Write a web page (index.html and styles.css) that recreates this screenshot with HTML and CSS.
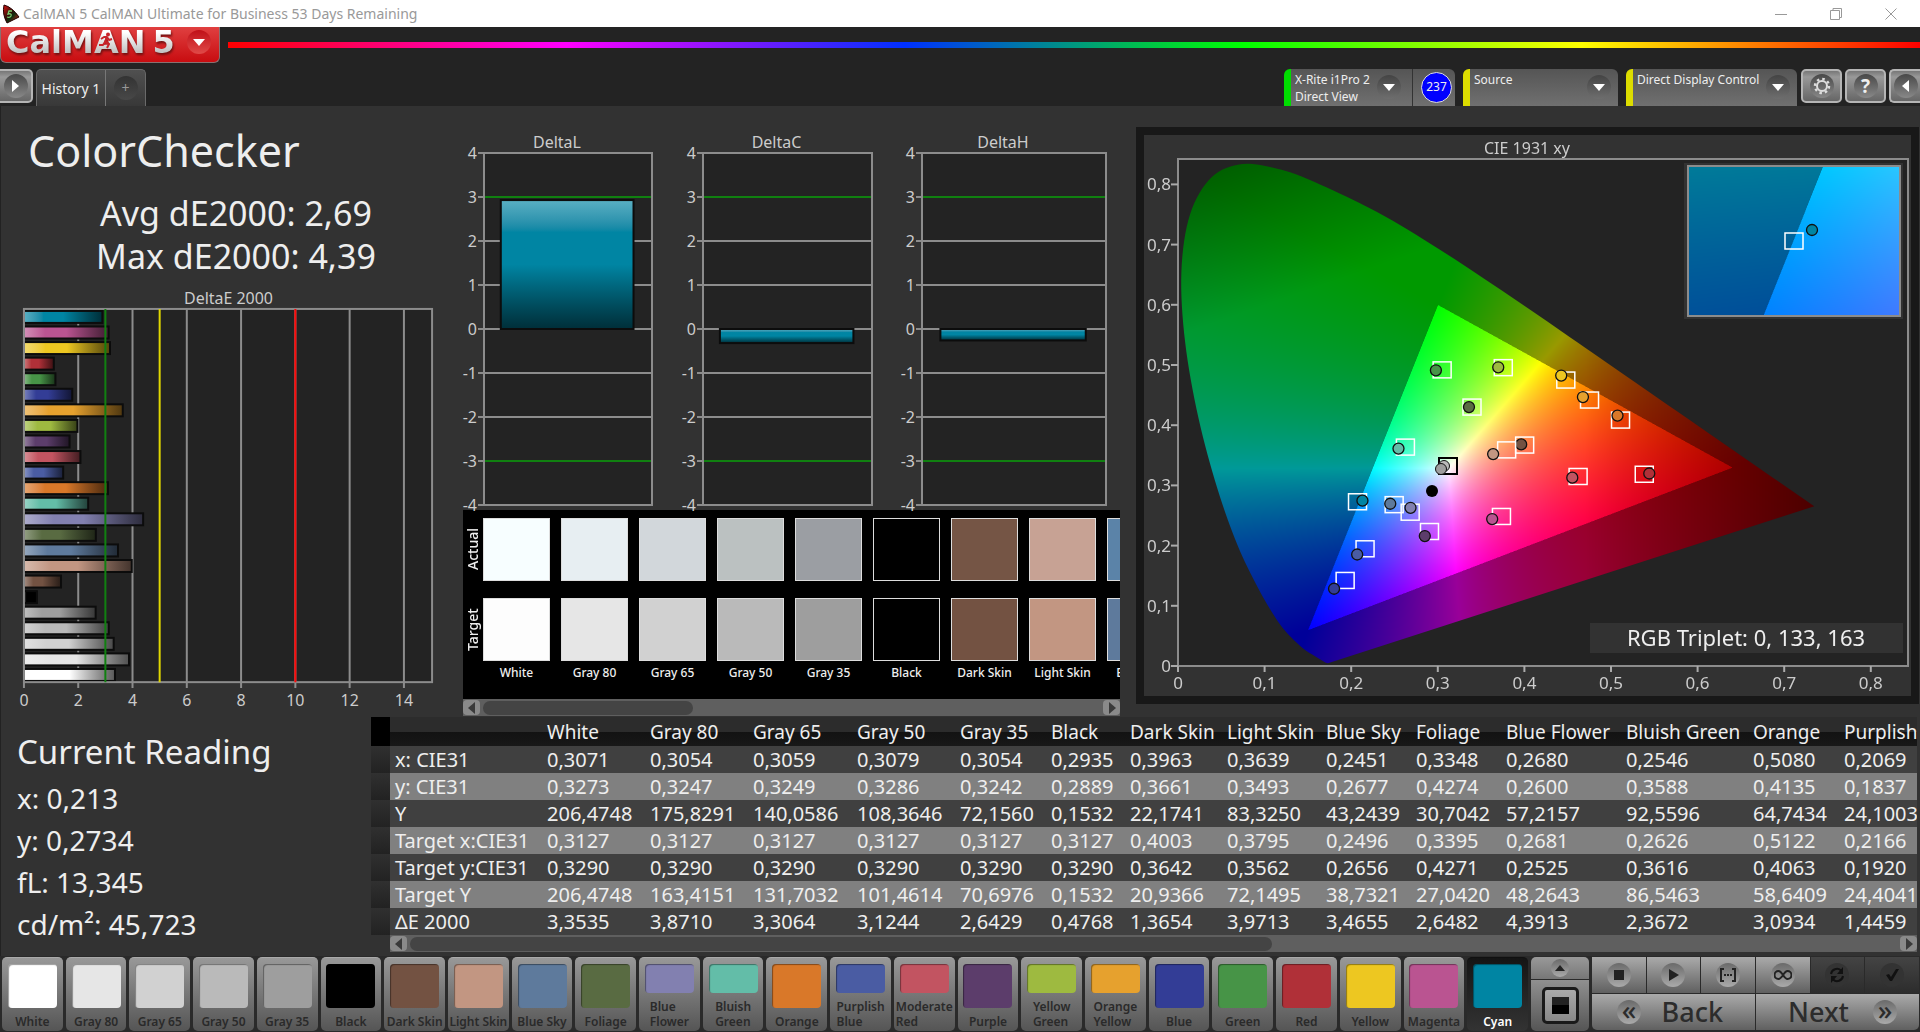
FILE: index.html
```html
<!DOCTYPE html>
<html lang="en">
<head>
  <meta charset="UTF-8" />
  <meta name="viewport" content="width=device-width, initial-scale=1.0"/>
  <title>CalMAN 5 CalMAN Ultimate for Business 53 Days Remaining</title>
  <link rel="stylesheet" href="styles.css">
</head>
<body>
  <header class="titlebar">
    <svg class="app-icon" width="18" height="20" viewBox="0 0 18 20">
      <defs>
        <linearGradient id="iconFill" x1="0" y1="0" x2="1" y2="1">
          <stop offset="0" stop-color="#e01010"/><stop offset="0.45" stop-color="#301008"/>
          <stop offset="0.6" stop-color="#103010"/><stop offset="1" stop-color="#f02020"/>
        </linearGradient>
      </defs>
      <path d="M2 1 Q0 10 5 19 L17 13 Q10 3 2 1 Z" fill="url(#iconFill)" stroke="#200" stroke-width="1"/>
      <path d="M10 7 H7 L6 10 Q10 9 9 12 Q8 14 5 13" fill="none" stroke="#7ad070" stroke-width="1.3"/>
    </svg>
    <span class="titlebar-text">CalMAN 5 CalMAN Ultimate for Business 53 Days Remaining</span>
    <button class="win-btn" aria-label="Minimize"><svg width="14" height="14" viewBox="0 0 14 14"><path d="M1 7.500H13"/></svg></button>
    <button class="win-btn" aria-label="Restore"><svg width="14" height="14" viewBox="0 0 14 14"><path d="M1.500 3.500H10.500V12.500H1.500ZM4 3.500V1.500H12.500V10.500H10.500"/></svg></button>
    <button class="win-btn" aria-label="Close"><svg width="14" height="14" viewBox="0 0 14 14"><path d="M1.500 1.500L12.500 12.500M12.500 1.500L1.500 12.500"/></svg></button>
  </header>

  <div class="brand">
    <button class="logo" aria-label="CalMAN 5 menu">
      <span class="logo-text">CalMAN</span><span class="logo-text">5</span>
      <svg class="runner" width="16" height="18" viewBox="0 0 16 18">
        <circle cx="10" cy="2.500" r="2" fill="#c8242a"/>
        <path d="M9 5L7 10L11 12L9 16M7 10L5 13L1 13M3 7L6 5L9 5L11 8L14 7" fill="none" stroke="#c8242a" stroke-width="2" stroke-linejoin="round"/>
      </svg>
      <span class="logo-arrow"><svg width="12" height="7" viewBox="0 0 12 7"><path d="M0 0H12L6 7Z" fill="#fff"/></svg></span>
    </button>
    <div class="rainbow"></div>
  </div>

  <nav class="tabs">
    <button class="square-btn first" aria-label="Expand"><span class="dot"><svg width="8" height="12" viewBox="0 0 8 12"><path d="M0 0L7 6L0 12Z"/></svg></span></button>
    <div class="history">
      <button class="history-tab">History 1</button>
      <button class="history-add" aria-label="Add history"><span>+</span></button>
    </div>
    <div class="devices">
      <div class="device meter">
        <button class="device-btn">X-Rite i1Pro 2<br>Direct View<span class="dot"><svg width="12" height="7" viewBox="0 0 12 7"><path d="M0 0H12L6 7Z"/></svg></span></button>
        <button class="count"><span>237</span></button>
      </div>
      <div class="device source">
        <button class="device-btn">Source<span class="dot"><svg width="12" height="7" viewBox="0 0 12 7"><path d="M0 0H12L6 7Z"/></svg></span></button>
      </div>
      <div class="device display">
        <button class="device-btn">Direct Display Control<span class="dot"><svg width="12" height="7" viewBox="0 0 12 7"><path d="M0 0H12L6 7Z"/></svg></span></button>
      </div>
    </div>
    <button class="square-btn" aria-label="Settings"><span class="dot"><svg width="18" height="18" viewBox="0 0 18 18"><circle cx="9" cy="9" r="5" fill="none" stroke="#ddd" stroke-width="2"/><circle cx="9" cy="9" r="7" fill="none" stroke="#ddd" stroke-width="2.500" stroke-dasharray="2.500 3"/></svg></span></button>
    <button class="square-btn" aria-label="Help"><span class="dot help">?</span></button>
    <button class="square-btn last" aria-label="Collapse"><span class="dot"><svg width="8" height="12" viewBox="0 0 8 12"><path d="M7 0L0 6L7 12Z"/></svg></span></button>
  </nav>

  <main>
    <section class="upper">
      <div class="summary">
        <h1>ColorChecker</h1>
        <p class="avg">Avg dE2000: 2,69</p>
        <p class="avg">Max dE2000: 4,39</p>
        <svg id="deltaE" class="chart" viewBox="0 0 463 433"></svg>
      </div>

      <div class="middle">
        <div class="deltas">
          <svg id="deltaL" class="chart" viewBox="0 0 219 404"></svg>
          <svg id="deltaC" class="chart" viewBox="0 0 219 404"></svg>
          <svg id="deltaH" class="chart" viewBox="0 0 219 404"></svg>
        </div>
        <div class="compare">
          <div class="compare-side"><span>Actual</span><span>Target</span></div>
          <div class="compare-list" id="compare"></div>
        </div>
        <div class="scrollbar">
          <button aria-label="Scroll left"><svg width="8" height="12" viewBox="0 0 8 12"><path d="M7 0L0 6L7 12Z"/></svg></button>
          <div class="track"><div class="thumb short"></div></div>
          <button aria-label="Scroll right"><svg width="8" height="12" viewBox="0 0 8 12"><path d="M1 0L8 6L1 12Z"/></svg></button>
        </div>
      </div>

      <div class="cie">
        <canvas id="cieColors" width="1534" height="1122"></canvas>
        <svg id="cieMarks" class="chart" viewBox="0 0 767 561"></svg>
      </div>
    </section>

    <section class="lower">
      <div class="reading">
        <h2>Current Reading</h2>
        <p>x: 0,213</p>
        <p>y: 0,2734</p>
        <p>fL: 13,345</p>
        <p>cd/m²: 45,723</p>
      </div>
      <div class="grid-wrap">
        <div class="grid-scroll">
          <table id="grid"></table>
        </div>
        <div class="scrollbar grid-bar">
          <button aria-label="Scroll left"><svg width="8" height="12" viewBox="0 0 8 12"><path d="M7 0L0 6L7 12Z"/></svg></button>
          <div class="track"><div class="thumb long"></div></div>
          <button aria-label="Scroll right"><svg width="8" height="12" viewBox="0 0 8 12"><path d="M1 0L8 6L1 12Z"/></svg></button>
        </div>
      </div>
    </section>
  </main>

  <footer>
    <div class="patches" id="patches"></div>
    <div class="pattern">
      <button class="pattern-up" aria-label="More"><span class="knob"><svg width="10" height="6" viewBox="0 0 10 6"><path d="M0 6L5 0L10 6Z"/></svg></span></button>
      <button class="pattern-main" aria-label="Pattern window"><span class="frame"><span></span></span></button>
    </div>
    <div class="controls">
      <button class="ctl" aria-label="Stop"><span class="knob"><svg width="16" height="16" viewBox="0 0 16 16"><path d="M3 3H13V13H3Z"/></svg></span></button>
      <button class="ctl" aria-label="Play"><span class="knob"><svg width="16" height="16" viewBox="0 0 16 16"><path d="M4 2L14 8L4 14Z"/></svg></span></button>
      <button class="ctl" aria-label="Read series"><span class="knob"><svg width="18" height="16" viewBox="0 0 18 16"><path class="line" d="M5 2H2V14H5M13 2H16V14H13"/><path d="M5 7H7V9H5ZM8 7H10V9H8ZM11 7H13V9H11Z"/></svg></span></button>
      <button class="ctl" aria-label="Continuous"><span class="knob"><svg width="18" height="12" viewBox="0 0 18 12"><path class="line" d="M9 6C7 3 6 2 4.500 2A4 4 0 0 0 4.500 10C6 10 7 9 9 6C11 3 12 2 13.500 2A4 4 0 0 1 13.500 10C12 10 11 9 9 6Z"/></svg></span></button>
      <button class="ctl off" aria-label="Refresh"><span class="knob"><svg width="18" height="18" viewBox="0 0 18 18"><path class="line" d="M3 8A6 6 0 0 1 13 4.500M15 10A6 6 0 0 1 5 13.500"/><path d="M15 1V8H9ZM3 17V10H9Z"/></svg></span></button>
      <button class="ctl off" aria-label="Accept"><span class="knob"><svg width="16" height="16" viewBox="0 0 16 16"><path d="M2 8L5 7L7 10L12 2H15L8 14H6Z"/></svg></span></button>
      <button class="step"><span class="knob">«</span>Back</button>
      <button class="step next">Next<span class="knob">»</span></button>
    </div>
  </footer>

  <script src="script.js"></script>
</body>
</html>
```
FILE: styles.css
```css
* {
  box-sizing: border-box;
}

body {
  font-family: 'Noto Sans', 'Open Sans', sans-serif;
  background-color: #232323;
  color: #eee;
  margin: 0;
  min-height: 100vh;
  display: flex;
  flex-direction: column;
  overflow-x: hidden;
}

button {
  font-family: inherit;
  color: inherit;
  border: 0;
  margin: 0;
  padding: 0;
  background: none;
}

h1, h2, p {
  margin: 0;
  font-weight: normal;
}

.chart {
  display: block;
  width: 100%;
  overflow: visible;
}

/* window title */
.titlebar {
  display: flex;
  align-items: center;
  height: 27px;
  background-color: #fff;
  color: #999;
  font-size: 14px;
}

.app-icon {
  margin: 0 3px 0 2px;
}

.titlebar-text {
  flex: 1;
}

.win-btn {
  width: 55px;
  height: 26px;
  display: flex;
  align-items: center;
  justify-content: center;
}

.win-btn svg {
  fill: none;
  stroke: #999;
}

.win-btn:last-child {
  margin-right: 2px;
}

/* logo and rainbow line */
.brand {
  display: flex;
  gap: 8px;
  height: 36px;
}

.logo {
  position: relative;
  display: flex;
  align-items: center;
  gap: 7px;
  width: 220px;
  height: 36px;
  padding: 0 8px 5px 5px;
  border: 1px solid #8a7070;
  border-top: 0;
  border-radius: 0 0 6px 6px;
  background: linear-gradient(#e04040, #c80c10);
}

.logo-text {
  font-family: 'DejaVu Sans', sans-serif;
  font-weight: bold;
  font-size: 32px;
  line-height: 32px;
  background: linear-gradient(#fff 20%, #c4c4c4 80%);
  background-clip: text;
  -webkit-background-clip: text;
  color: transparent;
  filter: drop-shadow(1px 2px 1px #701010);
}

.runner {
  position: absolute;
  left: 97px;
  top: 5px;
}

.logo-arrow {
  display: flex;
  align-items: center;
  justify-content: center;
  flex: none;
  width: 24px;
  height: 24px;
  margin-left: auto;
  border-radius: 50%;
  background: linear-gradient(#c01018, #e04a48);
}

.rainbow {
  flex: 1;
  height: 6px;
  margin-top: 15px;
  background: linear-gradient(to right, #f00, #f0f, #0030ff, #0f0, #ff0, #f00);
}

/* tab strip */
.tabs {
  display: flex;
  align-items: flex-start;
  gap: 3px;
  height: 43px;
  padding-top: 6px;
}

.square-btn {
  display: flex;
  align-items: center;
  justify-content: center;
  width: 41px;
  height: 34px;
  border: 2px solid #b5b5b5;
  border-radius: 5px;
  background: linear-gradient(#777, #999 20%, #666);
}

.square-btn.first {
  width: 33px;
  border-left: 0;
  border-radius: 0 5px 5px 0;
}

.square-btn.last {
  width: 31px;
  border-right: 0;
  border-radius: 5px 0 0 5px;
}

.dot {
  display: flex;
  align-items: center;
  justify-content: center;
  width: 24px;
  height: 24px;
  border-radius: 50%;
  background: linear-gradient(#484848, #888);
}

.dot path {
  fill: #fff;
}

.help {
  font-size: 19px;
  font-weight: bold;
}

.history {
  display: flex;
  height: 37px;
  border: 1px solid #6a6a6a;
  border-bottom: 0;
  border-radius: 5px 5px 0 0;
  background: linear-gradient(#505050, #383838);
}

.history-tab {
  width: 69px;
  font-size: 14px;
  border-right: 1px solid #777;
}

.history-add {
  width: 39px;
  font-size: 14px;
  color: #999;
  display: flex;
  align-items: center;
  justify-content: center;
}

.history-add span {
  width: 24px;
  height: 24px;
  line-height: 24px;
  border-radius: 50%;
  background: linear-gradient(#333, #484848);
}

.devices {
  display: flex;
  gap: 8px;
  margin-left: auto;
  margin-right: 1px;
}

.device {
  display: flex;
  height: 37px;
  border-left: 7px solid #dddd00;
  border-radius: 6px 6px 0 0;
  background: linear-gradient(#555, #707070);
}

.meter {
  width: 171px;
  border-left-color: #0d0;
}

.source {
  width: 155px;
}

.display {
  width: 171px;
}

.device-btn {
  position: relative;
  flex: 1;
  padding: 2px 4px;
  text-align: left;
  font-size: 12px;
  line-height: 17px;
  display: flex;
  align-items: flex-start;
}

.meter .device-btn {
  display: block;
}

.device-btn .dot {
  position: absolute;
  right: 7px;
  top: 6px;
  background: linear-gradient(#444, #6e6e6e);
}

.meter .device-btn .dot {
  right: 11px;
}

.count {
  width: 43px;
  padding-left: 8px;
  border-left: 1px solid #333;
}

.count span {
  display: block;
  width: 31px;
  height: 31px;
  line-height: 28px;
  border: 1px solid #ddd;
  border-radius: 50%;
  background-color: #00f;
  font-size: 12px;
}

/* workspace */
main {
  background-color: #323232;
  flex: 1;
  border-left: 1px solid #222;
}

.upper {
  display: grid;
  grid-template-columns: minmax(0, 462fr) minmax(0, 673fr) minmax(0, 783fr);
  padding-right: 1px;
}

.middle {
  padding-right: 16px;
}

h1 {
  font-size: 43px;
  line-height: 58px;
  padding: 16px 0 12px 27px;
}

.avg {
  font-size: 34px;
  line-height: 43px;
  padding-left: 8px;
  text-align: center;
}

.summary .chart {
  margin-top: 6px;
}

.deltas {
  display: grid;
  grid-template-columns: repeat(3, 1fr);
}

.compare {
  display: flex;
  height: 189px;
  background-color: #000;
}

.compare-side {
  display: flex;
  flex-direction: column;
  gap: 17px;
  width: 20px;
  padding-top: 8px;
}

.compare-side span {
  writing-mode: vertical-rl;
  transform: rotate(180deg);
  height: 63px;
  line-height: 20px;
  text-align: center;
  font-size: 14px;
  font-weight: 500;
}

.compare-list {
  flex: 1;
  min-width: 0;
  display: flex;
  gap: 11px;
  padding-top: 8px;
  overflow: hidden;
}

.pair {
  flex: 0 0 67px;
  font-size: 12px;
  font-weight: 500;
  text-align: center;
  white-space: nowrap;
}

.pair .swatch {
  height: 63px;
  margin-bottom: 17px;
  border: 1px solid #ddd;
}

.pair .swatch + .swatch {
  margin-bottom: 3px;
}

.scrollbar {
  display: flex;
  align-items: center;
  gap: 3px;
  height: 17px;
  background-color: #5f5f5f;
}

.scrollbar button {
  display: flex;
  align-items: center;
  justify-content: center;
  width: 17px;
  height: 15px;
  border-radius: 4px;
  background-color: #8a8a8a;
}

.scrollbar button path {
  fill: #3a3a3a;
}

.track {
  flex: 1;
}

.thumb {
  height: 14px;
  border-radius: 7px;
  background-color: #444;
}

.short {
  width: 34%;
}

.long {
  width: 58%;
}

.cie {
  position: relative;
  align-self: start;
  margin-top: 21px;
  border: 8px solid #181818;
}

.cie canvas {
  display: block;
  width: 100%;
}

.cie svg {
  position: absolute;
  left: 0;
  top: 0;
}

/* reading and data grid */
.lower {
  display: flex;
  padding: 1px 3px 0 0;
}

.reading {
  width: 370px;
  padding-left: 16px;
  flex: none;
}

.reading h2 {
  font-size: 33px;
  line-height: 42px;
  padding: 14px 0 4px;
}

.reading p {
  font-size: 28px;
  line-height: 42px;
}

.grid-wrap {
  flex: 1;
  min-width: 0;
}

.grid-scroll {
  overflow: hidden;
}

table {
  table-layout: fixed;
  width: 1550px;
  border-collapse: collapse;
  text-align: left;
}

td, th {
  height: 27px;
  padding: 0 0 0 5px;
  font-size: 20px;
  line-height: 26px;
  font-weight: normal;
  white-space: nowrap;
}

thead th {
  height: 29px;
  font-size: 19px;
  line-height: 28px;
}

thead tr {
  background: linear-gradient(#2c2c2c 50%, #121212 51%, #181818);
}

tbody tr {
  background-color: #404040;
}

tbody tr:nth-child(even) {
  background-color: #808080;
}

tbody td:first-child {
  background: linear-gradient(#303030, #222);
}

thead th:first-child {
  background-color: #000;
}

.grid-bar {
  margin-left: 19px;
}

/* patch buttons and transport */
footer {
  display: flex;
  gap: 3px;
  height: 76px;
  padding: 1px 1px 1px 2px;
  background-color: #2a2a2a;
}

.patches {
  flex: 1;
  display: grid;
  grid-template-columns: repeat(24, minmax(0, 1fr));
  gap: 3px;
}

.patch {
  display: flex;
  flex-direction: column;
  align-items: center;
  justify-content: space-between;
  padding: 6px 0 2px;
  border-top: 1px solid #aaa;
  border-radius: 5px;
  background: linear-gradient(#989898, #555);
  color: #2a2a2a;
  font-size: 12px;
  font-weight: 600;
  line-height: 15px;
  text-align: left;
  white-space: nowrap;
}

.patch .swatch {
  flex: 1;
  width: 49px;
  margin-bottom: 6px;
  border-radius: 4px;
  box-shadow: inset 1px 1px 1px rgba(0,0,0,0.4);
}

.patch.active {
  background: linear-gradient(#151515, #333);
  border-top-color: #111;
  color: #fff;
}

.knob {
  display: flex;
  align-items: center;
  justify-content: center;
  width: 24px;
  height: 24px;
  border-radius: 50%;
  background: linear-gradient(#6a6a6a, #aaa);
}

.knob path {
  fill: #222;
}

.knob .line {
  fill: none;
  stroke: #222;
  stroke-width: 2;
}

.pattern {
  display: flex;
  flex-direction: column;
  gap: 1px;
  width: 58px;
}

.pattern button {
  display: flex;
  align-items: center;
  justify-content: center;
  background: linear-gradient(#999, #777);
}

.pattern .pattern-up {
  height: 22px;
  border-radius: 5px 5px 0 0;
}

.pattern-up .knob {
  width: 18px;
  height: 18px;
}

.pattern .pattern-main {
  flex: 1;
  border-radius: 0 0 5px 5px;
  background: linear-gradient(#909090, #555);
}

.frame {
  display: flex;
  align-items: center;
  justify-content: center;
  width: 37px;
  height: 37px;
  border: 3px solid #1a1a1a;
  border-radius: 5px;
  background: linear-gradient(#aaa, #888);
}

.frame span {
  width: 17px;
  height: 17px;
  background: linear-gradient(#222 50%, #000 50%);
}

.controls {
  display: grid;
  grid-template-columns: repeat(6, 1fr);
  grid-template-rows: 36px 36px;
  gap: 1px;
  width: 327px;
}

.ctl {
  display: flex;
  align-items: center;
  justify-content: center;
  background: linear-gradient(#aaa, #606060);
}

.off {
  background: linear-gradient(#444, #2c2c2c);
}

.off .knob {
  background: #333;
}

.off .knob path {
  fill: #111;
}

.off .knob .line {
  fill: none;
  stroke: #111;
}

.step {
  grid-column: span 3;
  display: flex;
  align-items: center;
  justify-content: space-between;
  padding: 0 32px 0 25px;
  border-radius: 0 0 0 5px;
  background: linear-gradient(#aaa, #606060);
  color: #2c2c2c;
  font-size: 27px;
  font-weight: 500;
  line-height: 30px;
}

.step .knob {
  padding-bottom: 4px;
}

.next {
  padding: 0 22px 0 32px;
  border-radius: 0 0 5px 0;
}
```
FILE: script.js
```js
const patches = [
  { name: 'White', color: '#ffffff', actual: '#f7feff', target: '#fdfdfd', dE: 3.3535 },
  { name: 'Gray 80', color: '#e6e6e6', actual: '#e7eef2', dE: 3.871 },
  { name: 'Gray 65', color: '#d1d1d1', actual: '#d2d7db', dE: 3.3064 },
  { name: 'Gray 50', color: '#bababa', actual: '#bbc1c1', dE: 3.1244 },
  { name: 'Gray 35', color: '#9e9e9e', actual: '#9b9ea3', dE: 2.6429 },
  { name: 'Black', color: '#000000', actual: '#000000', dE: 0.4768 },
  { name: 'Dark Skin', color: '#735242', actual: '#755545', dE: 1.3654 },
  { name: 'Light Skin', color: '#c29682', actual: '#c7a294', dE: 3.9713 },
  { name: 'Blue Sky', color: '#5e7a9c', actual: '#5b83a8', dE: 3.4655 },
  { name: 'Foliage', color: '#596b42', dE: 2.6482 },
  { name: 'Blue Flower', color: '#8280b0', dE: 4.3913, wrap: true },
  { name: 'Bluish Green', color: '#63bda8', dE: 2.3672, wrap: true },
  { name: 'Orange', color: '#d97829', dE: 3.0934 },
  { name: 'Purplish Blue', color: '#4a5ca3', dE: 1.4459, wrap: true },
  { name: 'Moderate Red', color: '#c25461', dE: 2.08, wrap: true },
  { name: 'Purple', color: '#5c3d6b', dE: 1.68 },
  { name: 'Yellow Green', color: '#9eba40', dE: 1.97, wrap: true },
  { name: 'Orange Yellow', color: '#e6a12e', dE: 3.64, wrap: true },
  { name: 'Blue', color: '#333d96', dE: 1.78 },
  { name: 'Green', color: '#479447', dE: 1.16 },
  { name: 'Red', color: '#b03038', dE: 1.1 },
  { name: 'Yellow', color: '#edc721', dE: 3.17 },
  { name: 'Magenta', color: '#ba5491', dE: 3.12 },
  { name: 'Cyan', color: '#0085a3', dE: 2.89, active: true }
];

// [target x, target y, measured x, measured y, fill]
const points = [
  [0.4003, 0.3670, 0.3963, 0.3681, '#735242'],
  [0.3795, 0.3590, 0.3639, 0.3520, '#c29682'],
  [0.2496, 0.2680, 0.2451, 0.2695, '#5e7a9c'],
  [0.3395, 0.4301, 0.3360, 0.4301, '#596b42'],
  [0.2681, 0.2555, 0.2685, 0.2628, '#8280b0'],
  [0.2626, 0.3636, 0.2546, 0.3611, '#63bda8'],
  [0.5110, 0.4085, 0.5075, 0.4160, '#d97829'],
  [0.2160, 0.1947, 0.2069, 0.1852, '#4a5ca3'],
  [0.4620, 0.3148, 0.4553, 0.3129, '#c25461'],
  [0.2904, 0.2234, 0.2850, 0.2159, '#5c3d6b'],
  [0.3756, 0.4956, 0.3698, 0.4962, '#9eba40'],
  [0.4752, 0.4418, 0.4676, 0.4468, '#e6a12e'],
  [0.1930, 0.1421, 0.1802, 0.1283, '#333d96'],
  [0.3050, 0.4919, 0.2978, 0.4912, '#479447'],
  [0.5384, 0.3185, 0.5442, 0.3198, '#b03038'],
  [0.4478, 0.4750, 0.4425, 0.4825, '#edc721'],
  [0.3735, 0.2484, 0.3628, 0.2441, '#ba5491'],
  [0.2073, 0.2728, 0.2130, 0.2747, '#0085a3']
];

const columns = ['White', 'Gray 80', 'Gray 65', 'Gray 50', 'Gray 35', 'Black', 'Dark Skin', 'Light Skin', 'Blue Sky', 'Foliage', 'Blue Flower', 'Bluish Green', 'Orange', 'Purplish Blue'];
const widths = [19, 152, 103, 103, 104, 103, 91, 79, 97, 99, 90, 90, 120, 127, 91, 82];
const rows = [
  ['x: CIE31', '0,3071', '0,3054', '0,3059', '0,3079', '0,3054', '0,2935', '0,3963', '0,3639', '0,2451', '0,3348', '0,2680', '0,2546', '0,5080', '0,2069'],
  ['y: CIE31', '0,3273', '0,3247', '0,3249', '0,3286', '0,3242', '0,2889', '0,3661', '0,3493', '0,2677', '0,4274', '0,2600', '0,3588', '0,4135', '0,1837'],
  ['Y', '206,4748', '175,8291', '140,0586', '108,3646', '72,1560', '0,1532', '22,1741', '83,3250', '43,2439', '30,7042', '57,2157', '92,5596', '64,7434', '24,1003'],
  ['Target x:CIE31', '0,3127', '0,3127', '0,3127', '0,3127', '0,3127', '0,3127', '0,4003', '0,3795', '0,2496', '0,3395', '0,2681', '0,2626', '0,5122', '0,2166'],
  ['Target y:CIE31', '0,3290', '0,3290', '0,3290', '0,3290', '0,3290', '0,3290', '0,3642', '0,3562', '0,2656', '0,4271', '0,2525', '0,3616', '0,4063', '0,1920'],
  ['Target Y', '206,4748', '163,4151', '131,7032', '101,4614', '70,6976', '0,1532', '20,9366', '72,1495', '38,7321', '27,0420', '48,2643', '86,5463', '58,6409', '24,4041'],
  ['ΔE 2000', '3,3535', '3,8710', '3,3064', '3,1244', '2,6429', '0,4768', '1,3654', '3,9713', '3,4655', '2,6482', '4,3913', '2,3672', '3,0934', '1,4459']
];

function line(x1, y1, x2, y2, color, w = 2) {
  return `<line x1="${x1}" y1="${y1}" x2="${x2}" y2="${y2}" stroke="${color}" stroke-width="${w}"/>`;
}

function label(x, y, text, anchor = 'middle', size = 16) {
  return `<text x="${x}" y="${y}" font-size="${size}" fill="#ccc" text-anchor="${anchor}">${text}</text>`;
}

function shade(id, color, vertical) {
  const dir = vertical ? 'x2="0" y2="1"' : 'x2="1" y2="0"';
  return `<linearGradient id="${id}" x1="0" y1="0" ${dir}>
    <stop offset="0" stop-color="color-mix(in srgb, ${color} 65%, #fff)"/>
    <stop offset="0.25" stop-color="${color}"/>
    <stop offset="0.5" stop-color="${color}"/>
    <stop offset="1" stop-color="color-mix(in srgb, ${color} 35%, #000)"/>
  </linearGradient>`;
}

function drawDeltaE() {
  const left = 23, right = 432, top = 25, bottom = 399, unit = 27.2;
  let out = label(228, 20, 'DeltaE 2000');
  out += `<rect x="${left}" y="${top}" width="${right - left}" height="${bottom - top}" fill="#232323"/>`;
  for (let v = 0; v <= 14; v += 2) {
    const x = left + v * unit;
    out += line(x, top, x, bottom + 6, '#8c8c8c');
    out += label(x, 423, v);
  }
  [...patches].reverse().forEach((p, i) => {
    const y = 27 + i * 15.6;
    out += shade('bar' + i, p.color, false);
    out += `<rect x="${left}" y="${y}" width="${p.dE * unit}" height="12" fill="url(#bar${i})" stroke="#0c0c0c" stroke-width="2"/>`;
  });
  out += `<rect x="${left}" y="${top}" width="${right - left}" height="${bottom - top}" fill="none" stroke="#8c8c8c" stroke-width="2"/>`;
  out += line(left + 3 * unit, top, left + 3 * unit, bottom, '#108010');
  out += line(left + 5 * unit, top, left + 5 * unit, bottom, '#e0d800');
  out += line(left + 10 * unit, top, left + 10 * unit, bottom, '#ff0808');
  document.getElementById('deltaE').innerHTML = out;
}

function drawDelta(id, title, value, width) {
  const left = 21, top = 47, unit = 44, right = left + width;
  let out = label(left + width / 2 - 11, 42, title);
  out += `<rect x="${left}" y="${top}" width="${width}" height="${unit * 8}" fill="#232323"/>`;
  for (let v = 4; v >= -4; v--) {
    const y = top + (4 - v) * unit;
    out += line(left - 6, y, right, y, '#8c8c8c');
    if (Math.abs(v) === 3) out += line(left, y, right, y, '#108010');
    out += label(14, y + 6, v, 'end');
  }
  out += `<rect x="${left}" y="${top}" width="${width}" height="${unit * 8}" fill="none" stroke="#8c8c8c" stroke-width="2"/>`;
  const zero = top + 4 * unit;
  const h = Math.abs(value) * unit;
  out += shade(id + 'Fill', '#0085a3', true);
  out += `<rect x="${left + width * 0.1}" y="${value > 0 ? zero - h : zero}" width="${width * 0.79}" height="${h}" fill="url(#${id}Fill)" stroke="#0c0c0c" stroke-width="2"/>`;
  document.getElementById(id).innerHTML = out;
}

// spectral locus, 380nm to 700nm
const locus = [
  [0.1741, 0.0050], [0.1714, 0.0051], [0.1644, 0.0109], [0.1566, 0.0177], [0.1440, 0.0297], [0.1241, 0.0578],
  [0.1096, 0.0868], [0.0913, 0.1327], [0.0687, 0.2007], [0.0454, 0.2950], [0.0235, 0.4127], [0.0082, 0.5384],
  [0.0039, 0.6548], [0.0139, 0.7502], [0.0389, 0.8120], [0.0743, 0.8338], [0.1142, 0.8262], [0.1547, 0.8059],
  [0.2296, 0.7543], [0.3016, 0.6923], [0.3731, 0.6245], [0.4441, 0.5547], [0.5125, 0.4866], [0.5752, 0.4242],
  [0.6270, 0.3725], [0.6915, 0.3083], [0.7347, 0.2653]
];

function xyColor(x, y) {
  const X = x / y, Z = (1 - x - y) / y;
  const rgb = [
    3.2406 * X - 1.5372 - 0.4986 * Z,
    -0.9689 * X + 1.8758 + 0.0415 * Z,
    0.0557 * X - 0.2040 + 1.0570 * Z
  ];
  const inside = Math.min(...rgb) >= 0;
  const max = Math.max(...rgb);
  const edge = Math.max(0, x - 0.47) * 1.9 + Math.max(0, y - x / 2 - 0.55) * 1.5;
  const level = 255 * (inside ? 1 : 0.6) * Math.max(0.3, 1 - edge);
  return rgb.map(c => Math.max(0, c) / max * level);
}

function paint(w, h, toXY) {
  const c = document.createElement('canvas');
  c.width = w;
  c.height = h;
  const g = c.getContext('2d');
  const img = g.createImageData(w, h);
  for (let j = 0; j < h; j++) {
    for (let i = 0; i < w; i++) {
      const [x, y] = toXY(i, j);
      const rgb = xyColor(x, Math.max(y, 0.001));
      const k = (j * w + i) * 4;
      img.data[k] = rgb[0];
      img.data[k + 1] = rgb[1];
      img.data[k + 2] = rgb[2];
      img.data[k + 3] = 255;
    }
  }
  g.putImageData(img, 0, 0);
  return c;
}

const px = x => 34 + 866 * x;
const py = y => 531 - 602 * y;

function drawCieColors() {
  const g = document.getElementById('cieColors').getContext('2d');
  g.scale(2, 2);
  g.fillStyle = '#323232';
  g.fillRect(0, 0, 767, 561);
  g.fillStyle = '#232323';
  g.fillRect(34, 24, 730, 507);

  g.save();
  g.beginPath();
  g.moveTo(px(locus[0][0]), py(locus[0][1]));
  for (let i = 0; i < locus.length - 1; i++) {
    const a = locus[Math.max(i - 1, 0)], b = locus[i], c = locus[i + 1], d = locus[Math.min(i + 2, locus.length - 1)];
    g.bezierCurveTo(
      px(b[0] + (c[0] - a[0]) / 6), py(b[1] + (c[1] - a[1]) / 6),
      px(c[0] - (d[0] - b[0]) / 6), py(c[1] - (d[1] - b[1]) / 6),
      px(c[0]), py(c[1])
    );
  }
  g.closePath();
  g.clip();
  g.drawImage(paint(1460, 1014, (i, j) => [i / 2 / 866, (1014 - j) / 2 / 602]), 34, 24, 730, 507);
  g.restore();

  // zoomed view around the current patch
  g.fillStyle = '#323232';
  g.fillRect(540, 28, 219, 156);
  g.drawImage(paint(424, 300, (i, j) => [0.181 + i / 2 / 3890, 0.2965 - j / 2 / 2704]), 544, 31, 212, 150);
}

function drawCieMarks() {
  let out = label(383, 19, 'CIE 1931 xy');
  out += '<rect x="34" y="24" width="730" height="507" fill="none" stroke="#8c8c8c" stroke-width="2"/>';
  for (let v = 0; v <= 8; v++) {
    const text = v ? '0,' + v : '0';
    out += line(px(v / 10), 531, px(v / 10), 537, '#aaa');
    out += label(px(v / 10), 554, text, 'middle', 17);
    out += line(27, py(v / 10), 34, py(v / 10), '#aaa');
    out += label(27, py(v / 10) + 6, text, 'end', 17);
  }
  for (const [tx, ty, mx, my, fill] of points) {
    out += `<rect x="${px(tx) - 9}" y="${py(ty) - 8}" width="18" height="16" fill="none" stroke="#fff" stroke-width="1.5"/>`;
    out += `<circle cx="${px(mx)}" cy="${py(my)}" r="5.5" fill="${fill}" stroke="#111" stroke-width="1.3"/>`;
  }
  out += '<rect x="295" y="323" width="18" height="16" fill="none" stroke="#000" stroke-width="2"/>';
  out += '<circle cx="300" cy="331" r="5.5" fill="#bababa" stroke="#111"/>';
  out += '<circle cx="297" cy="334" r="5.5" fill="#9e9e9e" stroke="#111"/>';
  out += '<circle cx="288" cy="356" r="6" fill="#000"/>';
  out += '<rect x="544" y="31" width="212" height="150" fill="none" stroke="#8c8c8c" stroke-width="2"/>';
  out += '<rect x="641" y="98" width="18" height="16" fill="none" stroke="#fff" stroke-width="1.5"/>';
  out += '<circle cx="668" cy="95" r="5.5" fill="#0085a3" stroke="#111" stroke-width="1.3"/>';
  out += '<rect x="446" y="488" width="313" height="30" fill="#323232"/>';
  out += '<text x="602" y="511" font-size="22" fill="#eee" text-anchor="middle">RGB Triplet: 0, 133, 163</text>';
  document.getElementById('cieMarks').innerHTML = out;
}

function fillLists() {
  document.getElementById('compare').innerHTML = patches.slice(0, 9).map(p => `
    <div class="pair">
      <div class="swatch" style="background-color: ${p.actual}"></div>
      <div class="swatch" style="background-color: ${p.target || p.color}"></div>
      ${p.name}
    </div>
  `).join('');

  document.getElementById('patches').innerHTML = patches.map(p => `
    <button class="patch${p.active ? ' active' : ''}">
      <span class="swatch" style="background-color: ${p.color}"></span>
      <span>${p.wrap ? p.name.replace(' ', '<br>') : p.name}</span>
    </button>
  `).join('');

  document.getElementById('grid').innerHTML = `
    <colgroup>${widths.map(w => `<col style="width: ${w}px">`).join('')}</colgroup>
    <thead><tr><th></th><th></th>${columns.map(c => `<th>${c}</th>`).join('')}</tr></thead>
    <tbody>${rows.map(r => `<tr><td></td><th>${r[0]}</th>${r.slice(1).map(v => `<td>${v}</td>`).join('')}</tr>`).join('')}</tbody>
  `;
}

fillLists();
drawDeltaE();
drawDelta('deltaL', 'DeltaL', 2.93, 168);
drawDelta('deltaC', 'DeltaC', -0.32, 169);
drawDelta('deltaH', 'DeltaH', -0.26, 184);
drawCieColors();
drawCieMarks();
```
